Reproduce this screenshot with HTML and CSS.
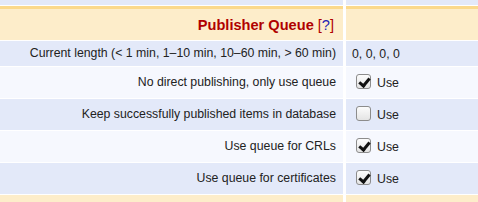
FILE: index.html
```html
<!DOCTYPE html>
<html>

<head>
    <title>Publisher Queue</title>
    <link rel="stylesheet" href="styles.css">
</head>

<body>
    <div class="queue">
        <div class="cell row-blue cut"></div>
        <div class="cell row-blue cut"></div>

        <div class="cell head label">Publisher Queue <span class="help">[<a href="#">?</a>]</span></div>
        <div class="cell head"></div>

        <div class="cell row-blue label short">Current length (&lt; 1 min, 1&ndash;10 min, 10&ndash;60 min, &gt; 60 min)</div>
        <div class="cell row-blue value short">0, 0, 0, 0</div>

        <div class="cell row-white label">No direct publishing, only use queue</div>
        <div class="cell row-white value"><span class="check on"></span> Use</div>

        <div class="cell row-blue label">Keep successfully published items in database</div>
        <div class="cell row-blue value"><span class="check"></span> Use</div>

        <div class="cell row-white label">Use queue for CRLs</div>
        <div class="cell row-white value"><span class="check on"></span> Use</div>

        <div class="cell row-blue label">Use queue for certificates</div>
        <div class="cell row-blue value"><span class="check on"></span> Use</div>

        <div class="cell foot"></div>
        <div class="cell foot"></div>
    </div>
</body>

</html>
```

FILE: styles.css
```css
body {
    margin: 0;
    background: #fff;
    font-family: "Liberation Sans", Arial, sans-serif;
    font-size: 12.3px;
    color: #222;
    overflow: hidden;
}

.queue {
    display: grid;
    grid-template-columns: 343px 1fr;
    column-gap: 3px;
    row-gap: 1px;
}

.cell {
    height: 31px;
    display: flex;
    align-items: center;
    box-sizing: border-box;
}

.cut {
    height: 5px;
}

.short {
    height: 25px;
}

.row-blue {
    background: #e3e9f9;
}

.row-white {
    background: #f6f8fe;
}

.head {
    height: 34px;
    background: #fdedca;
    border-top: 3px solid #fbd98c;
    font-size: 14.6px;
    font-weight: bold;
    color: #b00000;
}

.foot {
    height: 10px;
    background: #fdedca;
}

.label {
    justify-content: flex-end;
    padding-right: 7px;
    padding-bottom: 2px;
    text-align: right;
}

.head.label {
    padding-right: 9px;
    padding-bottom: 0;
}

.help {
    font-weight: normal;
    margin-left: 4px;
}

.help a {
    color: #1d1db5;
    text-decoration: none;
}

.value {
    padding-left: 6px;
    align-items: flex-end;
    padding-bottom: 8px;
}

.value.short {
    align-items: center;
    padding-bottom: 0;
}

.check {
    display: inline-block;
    width: 15px;
    height: 15px;
    box-sizing: border-box;
    margin: 0 6px 1px 4px;
    border: 1px solid #8c8c8c;
    border-radius: 3px;
    background: linear-gradient(#fcfcfc, #e4e4e4);
    position: relative;
}

.check.on::after {
    content: "";
    position: absolute;
    left: 4px;
    top: 1px;
    width: 4px;
    height: 8px;
    border: solid #111;
    border-width: 0 3px 3px 0;
    transform: rotate(40deg);
}
```
